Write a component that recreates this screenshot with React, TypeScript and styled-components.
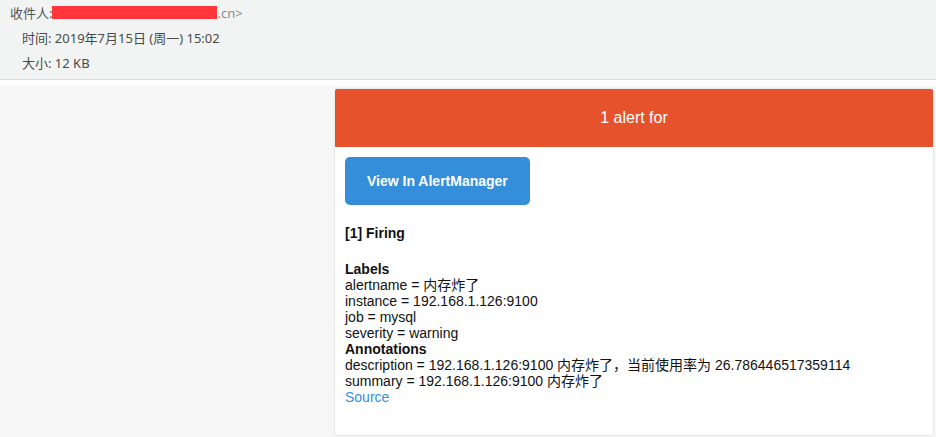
import React from "react";
import styled, { createGlobalStyle } from "styled-components";

const Global = createGlobalStyle`
  html, body { margin: 0; padding: 0; background: #f6f6f6; }
  #root { min-height: 437px; display: flex; flex-direction: column; }
`;

const Page = styled.div`
  display: flex;
  flex-direction: column;
  min-height: 437px;
  background: #f6f6f6;
`;

const MailHeader = styled.div`
  height: 80px;
  box-sizing: border-box;
  background: #f1f4f3;
  border-bottom: 1px solid #dcdcdc;
  padding: 0 0 0 10px;
  display: flex;
  flex-direction: column;
  font-family: "Noto Sans", "Noto Sans CJK SC", sans-serif;
  font-size: 13px;
  color: #4a4a4a;
`;

const MetaRow = styled.div<{ $indent?: number }>`
  height: 25px;
  display: flex;
  align-items: center;
  padding-left: ${(p) => p.$indent ?? 0}px;
  white-space: nowrap;
`;

const Label = styled.span`
  color: #555;
`;

const Redacted = styled.span`
  display: inline-block;
  width: 165px;
  height: 13px;
  background: #ff363a;
`;

const Muted = styled.span`
  color: #8a8a8a;
`;

const Spacer = styled.div`
  height: 6px;
  background: #ffffff;
`;

const Body = styled.div`
  flex: 1;
  display: flex;
  justify-content: flex-end;
  padding: 2px 2px 2px 0;
  background: #f6f6f6;
`;

const Card = styled.div`
  width: 600px;
  box-sizing: border-box;
  align-self: flex-start;
  background: #fff;
  border: 1px solid #e9e9e9;
  border-radius: 3px;
  overflow: hidden;
  font-family: "Liberation Sans", Arial, "Noto Sans CJK SC", sans-serif;
  font-size: 14px;
  line-height: 16px;
  color: #111;
`;

const AlertBar = styled.div`
  background: #e6522c;
  color: #fff;
  font-size: 16px;
  line-height: 18px;
  padding: 20px;
  text-align: center;
`;

const Content = styled.div`
  padding: 10px;
  display: flex;
  flex-direction: column;
`;

const Block = styled.div`
  padding-bottom: 20px;
`;

const Button = styled.a`
  display: inline-block;
  background: #348eda;
  color: #fff;
  font-weight: bold;
  font-size: 14px;
  line-height: 28px;
  padding: 10px 22px;
  border-radius: 5px;
  text-decoration: none;
`;

const Line = styled.div``;

const Strong = styled.strong`
  font-weight: bold;
  display: block;
`;

const Link = styled.a`
  color: #348eda;
  text-decoration: none;
`;

export default function App() {
  return (
    <>
      <Global />
      <Page>
        <MailHeader>
          <MetaRow>
            <Label>收件人:</Label>
            <Redacted />
            <Muted>.cn&gt;</Muted>
          </MetaRow>
          <MetaRow $indent={12}>时间: 2019年7月15日 (周一) 15:02</MetaRow>
          <MetaRow $indent={12}>大小: 12 KB</MetaRow>
        </MailHeader>
        <Spacer />
        <Body>
          <Card>
            <AlertBar>1 alert for</AlertBar>
            <Content>
              <Block>
                <Button href="#">View In AlertManager</Button>
              </Block>
              <Block>
                <Strong>[1] Firing</Strong>
              </Block>
              <Block>
                <Strong>Labels</Strong>
                <Line>alertname = 内存炸了</Line>
                <Line>instance = 192.168.1.126:9100</Line>
                <Line>job = mysql</Line>
                <Line>severity = warning</Line>
                <Strong>Annotations</Strong>
                <Line>description = 192.168.1.126:9100 内存炸了，当前使用率为 26.786446517359114</Line>
                <Line>summary = 192.168.1.126:9100 内存炸了</Line>
                <Link href="#">Source</Link>
              </Block>
            </Content>
          </Card>
        </Body>
      </Page>
    </>
  );
}
